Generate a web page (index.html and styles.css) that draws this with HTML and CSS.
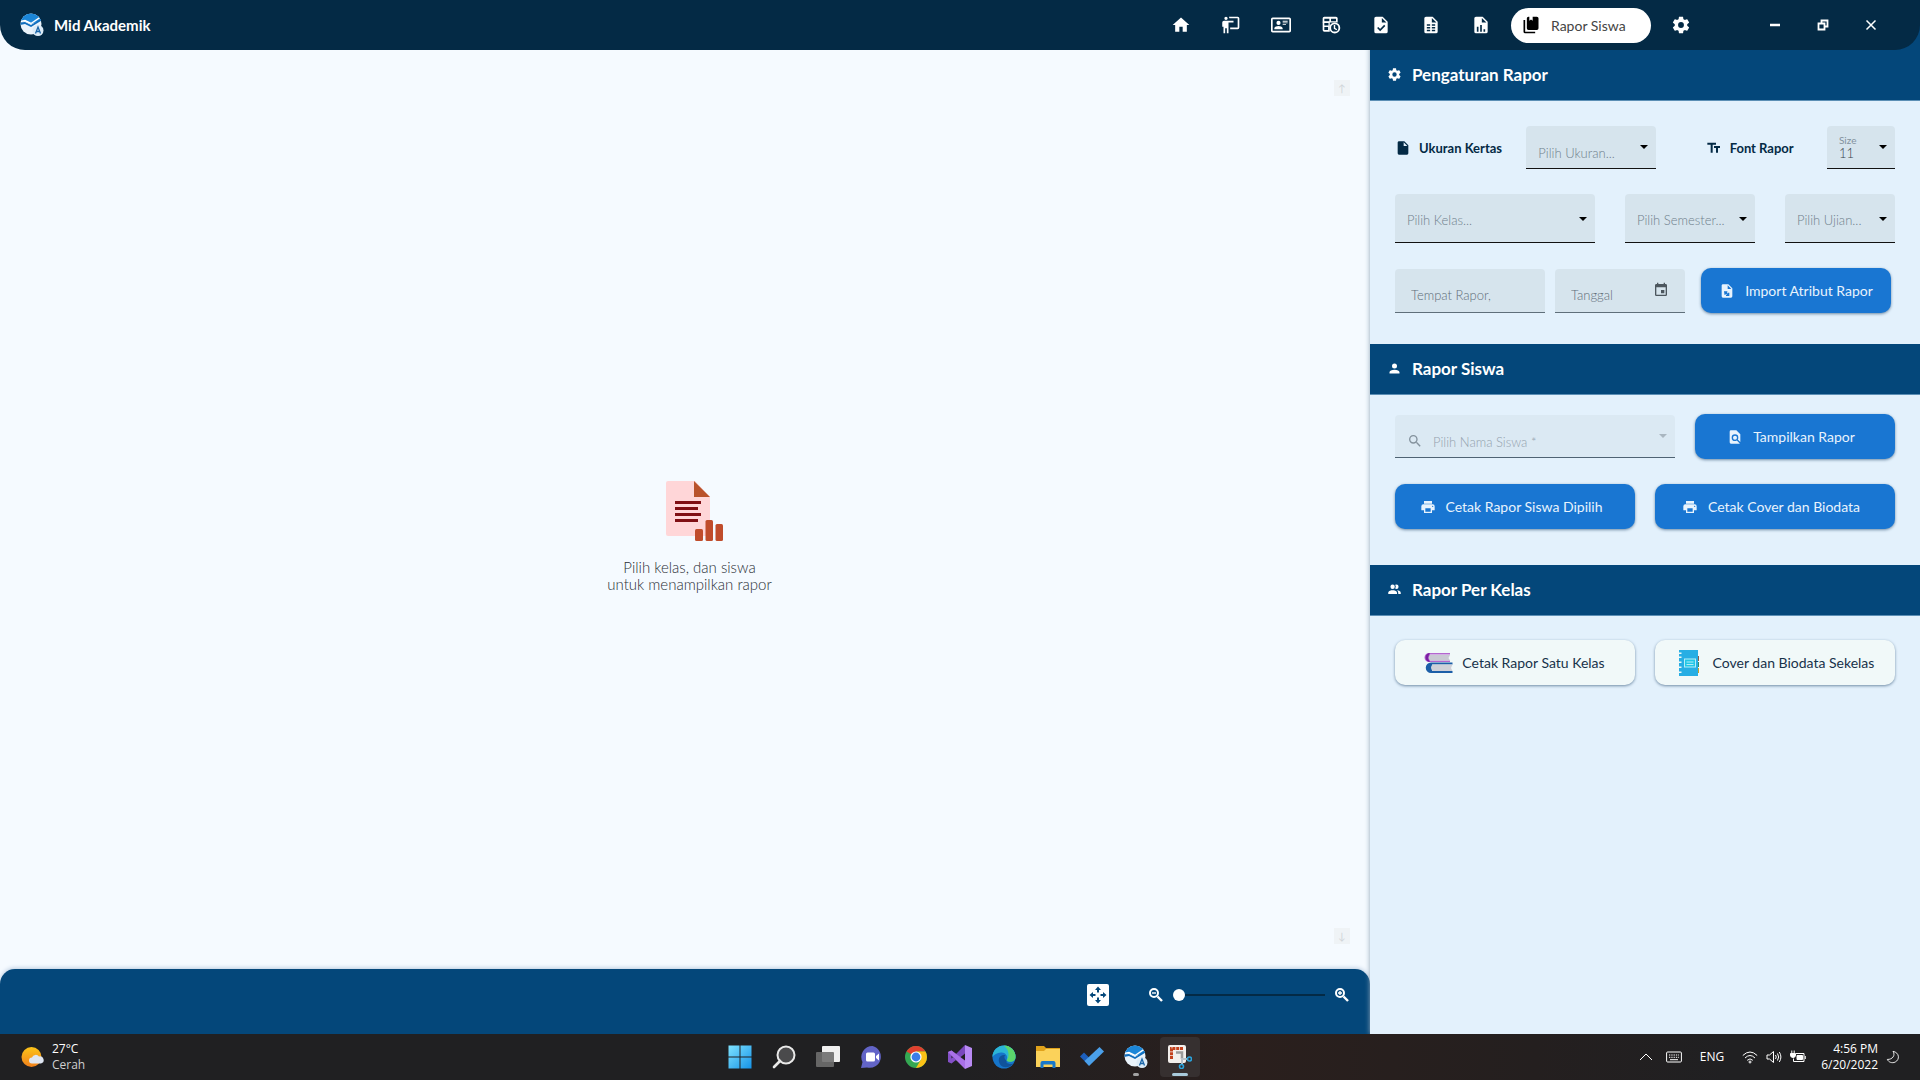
FILE: index.html
```html
<!DOCTYPE html>
<html lang="id">
<head>
    <meta charset="utf-8">
    <title>Mid Akademik - Rapor Siswa</title>
    <link rel="stylesheet" href="styles.css">
</head>
<body>

    <svg class="sprite" aria-hidden="true">
        <symbol id="i-home" viewBox="0 0 24 24"><path d="M10,20V14H14V20H19V12H22L12,3L2,12H5V20H10Z"/></symbol>
        <symbol id="i-teacher" viewBox="0 0 24 24"><path d="M20,17A2,2 0 0,0 22,15V4A2,2 0 0,0 20,2H9.46C9.81,2.61 10,3.3 10,4H20V15H11V17M15,7V9H9V22H7V16H5V22H3V14H1.5V9A2,2 0 0,1 3.5,7H15M8,4A2,2 0 0,1 6,6A2,2 0 0,1 4,4A2,2 0 0,1 6,2A2,2 0 0,1 8,4Z"/></symbol>
        <symbol id="i-card" viewBox="0 0 24 24"><path d="M22,3H2C0.91,3.04 0.04,3.91 0,5V19C0.04,20.09 0.91,20.96 2,21H22C23.09,20.96 23.96,20.09 24,19V5C23.96,3.91 23.09,3.04 22,3M22,19H2V5H22V19M14,17V15.75C14,14.09 10.66,13.25 9,13.25C7.34,13.25 4,14.09 4,15.75V17H14M9,7A2.5,2.5 0 0,0 6.5,9.5A2.5,2.5 0 0,0 9,12A2.5,2.5 0 0,0 11.5,9.5A2.5,2.5 0 0,0 9,7M14,7V8H20V7H14M14,9V10H20V9H14M14,11V12H18V11H14"/></symbol>
        <symbol id="i-schedule" viewBox="0 0 24 24">
            <path fill-rule="evenodd" d="M4,2H18A2,2 0 0,1 20,4V9H2V4A2,2 0 0,1 4,2M4,4.500V7.500H10V4.500ZM12,4.500V7.500H18V4.500Z"/>
            <path fill-rule="evenodd" d="M2,8H10.500V20H4A2,2 0 0,1 2,18ZM4,9.500V12.500H9V9.500ZM4,14.500V18H8.500V14.500Z"/>
            <circle cx="16.500" cy="15.500" r="5.500" style="fill: var(--cut)" stroke="currentColor" stroke-width="2.200"/>
            <path d="M16.200,12V16L19,17.700" fill="none" stroke="currentColor" stroke-width="1.700"/>
        </symbol>
        <symbol id="i-file" viewBox="0 0 24 24"><path d="M13,9V3.500L18.500,9M6,2C4.890,2 4,2.890 4,4V20A2,2 0 0,0 6,22H18A2,2 0 0,0 20,20V8L14,2H6Z"/></symbol>
        <symbol id="i-file-check" viewBox="0 0 24 24"><use href="#i-file"/><path class="cut" d="M8,15L11,18L16.500,12.500" stroke-width="2"/></symbol>
        <symbol id="i-file-table" viewBox="0 0 24 24"><use href="#i-file"/><path class="cut" d="M7,12H11M13,12H17M7,15.300H11M13,15.300H17M7,18.600H11M13,18.600H17" stroke-width="2"/></symbol>
        <symbol id="i-file-chart" viewBox="0 0 24 24"><use href="#i-file"/><path class="cut" d="M8,20V14M12,20V12M16,20V17" stroke-width="2"/></symbol>
        <symbol id="i-file-import" viewBox="0 0 24 24"><use href="#i-file"/><path class="cut" d="M9,17.500V12.500M7.500,13.300H12.500M9.500,13.500L14,18M14.500,14.500V18.500H10.500" stroke-width="2"/></symbol>
        <symbol id="i-books" viewBox="0 0 24 24"><path d="M19,18H9A2,2 0 0,1 7,16V4A2,2 0 0,1 9,2H10V7L12,5.500L14,7V2H19A2,2 0 0,1 21,4V16A2,2 0 0,1 19,18M17,20V22H5A2,2 0 0,1 3,20V6H5V20H17Z"/></symbol>
        <symbol id="i-cog" viewBox="0 0 24 24"><path d="M12,15.5A3.5,3.5 0 0,1 8.5,12A3.5,3.5 0 0,1 12,8.5A3.5,3.5 0 0,1 15.5,12A3.5,3.5 0 0,1 12,15.5M19.43,12.97C19.47,12.65 19.5,12.33 19.5,12C19.5,11.67 19.47,11.34 19.43,11L21.54,9.37C21.73,9.22 21.78,8.95 21.66,8.73L19.66,5.27C19.54,5.05 19.27,4.96 19.05,5.05L16.56,6.05C16.04,5.66 15.5,5.32 14.87,5.07L14.5,2.42C14.46,2.18 14.25,2 14,2H10C9.75,2 9.54,2.18 9.5,2.42L9.13,5.07C8.5,5.32 7.96,5.66 7.44,6.05L4.95,5.05C4.73,4.96 4.46,5.05 4.34,5.27L2.34,8.73C2.21,8.95 2.27,9.22 2.46,9.37L4.57,11C4.53,11.34 4.5,11.67 4.5,12C4.5,12.33 4.53,12.65 4.57,12.97L2.46,14.63C2.27,14.78 2.21,15.05 2.34,15.27L4.34,18.73C4.46,18.95 4.73,19.03 4.95,18.95L7.44,17.94C7.96,18.34 8.5,18.68 9.13,18.93L9.5,21.58C9.54,21.82 9.75,22 10,22H14C14.25,22 14.46,21.82 14.5,21.58L14.87,18.93C15.5,18.67 16.04,18.34 16.56,17.94L19.05,18.95C19.27,19.03 19.54,18.95 19.66,18.73L21.66,15.27C21.78,15.05 21.73,14.78 21.54,14.63L19.43,12.97Z"/></symbol>
        <symbol id="i-text" viewBox="0 0 24 24"><path d="M2,4V7H7V19H10V7H15V4H2M21,9H12V12H15V19H18V12H21V9Z"/></symbol>
        <symbol id="i-calendar" viewBox="0 0 24 24"><path d="M19,19H5V8H19M16,1V3H8V1H6V3H5C3.89,3 3,3.89 3,5V19A2,2 0 0,0 5,21H19A2,2 0 0,0 21,19V5C21,3.89 20.1,3 19,3H18V1M17,12H12V17H17V12Z"/></symbol>
        <symbol id="i-person" viewBox="0 0 24 24"><path d="M12,4A4,4 0 0,1 16,8A4,4 0 0,1 12,12A4,4 0 0,1 8,8A4,4 0 0,1 12,4M12,14C16.42,14 20,15.79 20,18V20H4V18C4,15.79 7.58,14 12,14Z"/></symbol>
        <symbol id="i-people" viewBox="0 0 24 24"><path d="M16 17V19H2V17S2 13 9 13 16 17 16 17M12.5 7.5A3.5 3.5 0 1 0 9 11A3.5 3.5 0 0 0 12.5 7.5M15.94 13A5.32 5.32 0 0 1 18 17V19H22V17S22 13.37 15.94 13M15 4A3.39 3.39 0 0 0 13.07 4.59A5 5 0 0 1 13.07 10.41A3.39 3.39 0 0 0 15 11A3.5 3.5 0 0 0 15 4Z"/></symbol>
        <symbol id="i-search" viewBox="0 0 24 24"><path d="M9.5,3A6.5,6.5 0 0,1 16,9.5C16,11.11 15.41,12.59 14.44,13.73L14.71,14H15.5L20.5,19L19,20.5L14,15.5V14.71L13.73,14.44C12.59,15.41 11.11,16 9.5,16A6.5,6.5 0 0,1 3,9.5A6.5,6.5 0 0,1 9.5,3M9.5,5C7,5 5,7 5,9.5C5,12 7,14 9.5,14C12,14 14,12 14,9.5C14,7 12,5 9.5,5Z"/></symbol>
        <symbol id="i-file-find" viewBox="0 0 24 24"><path d="M9,13A3,3 0 0,0 12,16A3,3 0 0,0 15,13A3,3 0 0,0 12,10A3,3 0 0,0 9,13M20,19.59V8L14,2H6A2,2 0 0,0 4,4V20A2,2 0 0,0 6,22H18C18.45,22 18.85,21.85 19.19,21.6L14.76,17.17C13.96,17.69 13,18 12,18A5,5 0 0,1 7,13A5,5 0 0,1 12,8A5,5 0 0,1 17,13C17,14 16.69,14.96 16.17,15.75L20,19.59Z"/></symbol>
        <symbol id="i-print" viewBox="0 0 24 24"><path d="M18,3H6V7H18M19,12A1,1 0 0,1 18,11A1,1 0 0,1 19,10A1,1 0 0,1 20,11A1,1 0 0,1 19,12M16,19H8V14H16M19,8H5A3,3 0 0,0 2,11V17H6V21H18V17H22V11A3,3 0 0,0 19,8Z"/></symbol>
        <symbol id="i-lens" viewBox="0 0 14 14">
            <circle cx="5" cy="5" r="4" fill="none" stroke="currentColor" stroke-width="2"/>
            <path d="M8.500,8.500L13,13" stroke="currentColor" stroke-width="2.400"/>
        </symbol>
        <symbol id="i-logo" viewBox="0 0 24 24">
            <clipPath id="disc"><circle cx="11" cy="11" r="10.500"/></clipPath>
            <g clip-path="url(#disc)">
                <rect width="24" height="24" fill="#eaf3fb"/>
                <path d="M0,0H24V5L17,9L11,11L5,8L0,9Z" fill="#1b86d8"/>
                <path d="M0,9.500L5,9L11,12L24,4V6L11,14L5,11L0,12Z" fill="#0f6dbd"/>
                <path d="M0,8.500L5,7.500L11,10.500L22,3" fill="none" stroke="#fff" stroke-width="1.500"/>
            </g>
            <circle cx="18" cy="17.500" r="5.500" fill="#dcebf7"/>
            <path d="M15.500,20.500L18,14L20.500,20.500M16.500,18.500H19.500" fill="none" stroke="#1764a8" stroke-width="1.300"/>
        </symbol>
    </svg>

    <div class="app">
        <header class="topbar">
            <div class="brand">
                <svg class="logo"><use href="#i-logo"/></svg>
                <span>Mid Akademik</span>
            </div>
            <nav class="menu">
                <a href="#" aria-label="Beranda"><svg class="icon"><use href="#i-home"/></svg></a>
                <a href="#" aria-label="Guru"><svg class="icon"><use href="#i-teacher"/></svg></a>
                <a href="#" aria-label="Siswa"><svg class="icon"><use href="#i-card"/></svg></a>
                <a href="#" aria-label="Jadwal"><svg class="icon"><use href="#i-schedule"/></svg></a>
                <a href="#" aria-label="Absensi"><svg class="icon"><use href="#i-file-check"/></svg></a>
                <a href="#" aria-label="Nilai"><svg class="icon"><use href="#i-file-table"/></svg></a>
                <a href="#" aria-label="Rekap"><svg class="icon"><use href="#i-file-chart"/></svg></a>
                <a href="#" class="active"><svg class="icon"><use href="#i-books"/></svg><span>Rapor Siswa</span></a>
                <a href="#" aria-label="Pengaturan"><svg class="icon"><use href="#i-cog"/></svg></a>
            </nav>
            <div class="window-buttons">
                <button type="button" aria-label="Minimize"><svg viewBox="0 0 12 12"><path d="M1,6H11" stroke-width="2.500"/></svg></button>
                <button type="button" aria-label="Restore"><svg viewBox="0 0 12 12"><path d="M1.500,4.500H7.500V10.500H1.500ZM4.500,4V1.500H10.500V7.500H8" stroke-width="1.800"/></svg></button>
                <button type="button" aria-label="Close"><svg viewBox="0 0 12 12"><path d="M1.500,1.500L10.500,10.500M10.500,1.500L1.500,10.500" stroke-width="1.500"/></svg></button>
            </div>
        </header>

        <div class="content">
            <main class="viewer">
                <div class="page-area">
                    <div class="empty">
                        <svg class="empty-icon" viewBox="0 0 58 60">
                            <path d="M2,0H29L44,16V55H2Q0,55 0,53V2Q0,0 2,0Z" fill="#ffd6d8"/>
                            <path d="M28,0L44,16H28Z" fill="#b9522b"/>
                            <path d="M9,21.500H35M9,27.500H32M9,33.500H35M9,39.500H32" stroke="#800f14" stroke-width="2.800"/>
                            <g fill="#c04c2b"><rect x="29" y="48" width="8" height="12" rx="1.500"/><rect x="39.500" y="39" width="7.500" height="21" rx="1.500"/><rect x="49.500" y="43" width="7.500" height="17" rx="1.500"/></g>
                        </svg>
                        <p>Pilih kelas, dan siswa<br>untuk menampilkan rapor</p>
                    </div>
                    <div class="page-buttons">
                        <button type="button" disabled>↑</button>
                        <button type="button" disabled>↓</button>
                    </div>
                </div>
                <div class="zoombar">
                    <button type="button" class="fit" aria-label="Fit">
                        <svg viewBox="0 0 22 22"><path d="M11,2.500L14,6H12V8.500H10V6H8ZM11,19.500L8,16H10V13.500H12V16H14ZM2.500,11L6,8V10H8.500V12H6V14ZM19.500,11L16,14V12H13.500V10H16V8Z"/></svg>
                    </button>
                    <div class="zoom">
                        <button type="button" aria-label="Zoom out"><svg viewBox="0 0 14 14"><use href="#i-lens"/><path d="M3,5H7" stroke="currentColor" stroke-width="1.400"/></svg></button>
                        <input type="range" min="0" max="100" value="0" aria-label="Zoom">
                        <button type="button" aria-label="Zoom in"><svg viewBox="0 0 14 14"><use href="#i-lens"/><path d="M3,5H7M5,3V7" stroke="currentColor" stroke-width="1.400"/></svg></button>
                    </div>
                </div>
            </main>

            <aside class="sidebar">
                <h2><svg><use href="#i-cog"/></svg>Pengaturan Rapor</h2>
                <form class="section settings">
                    <div class="row">
                        <label class="caption" for="ukuran"><svg><use href="#i-file"/></svg>Ukuran Kertas</label>
                        <div class="field w130"><select id="ukuran"><option>Pilih Ukuran...</option></select></div>
                        <label class="caption font" for="size"><svg><use href="#i-text"/></svg>Font Rapor</label>
                        <div class="field size">
                            <label for="size">Size</label>
                            <select id="size"><option>11</option></select>
                        </div>
                    </div>
                    <div class="row tall">
                        <div class="field w200"><select aria-label="Kelas"><option>Pilih Kelas...</option></select></div>
                        <div class="field w130"><select aria-label="Semester"><option>Pilih Semester...</option></select></div>
                        <div class="field w110"><select aria-label="Ujian"><option>Pilih Ujian...</option></select></div>
                    </div>
                    <div class="row place">
                        <div class="field input w150"><input type="text" placeholder="Tempat Rapor," aria-label="Tempat Rapor"></div>
                        <div class="field input w130">
                            <input type="text" placeholder="Tanggal" aria-label="Tanggal">
                            <svg class="calendar"><use href="#i-calendar"/></svg>
                        </div>
                        <button type="button" class="btn import"><svg><use href="#i-file-import"/></svg>Import Atribut Rapor</button>
                    </div>
                </form>

                <h2><svg><use href="#i-person"/></svg>Rapor Siswa</h2>
                <form class="section student">
                    <div class="row">
                        <div class="field search">
                            <svg class="magnify"><use href="#i-search"/></svg>
                            <select disabled aria-label="Nama Siswa"><option>Pilih Nama Siswa *</option></select>
                        </div>
                        <button type="button" class="btn w200"><svg><use href="#i-file-find"/></svg>Tampilkan Rapor</button>
                    </div>
                    <div class="row halves">
                        <button type="button" class="btn"><svg><use href="#i-print"/></svg>Cetak Rapor Siswa Dipilih</button>
                        <button type="button" class="btn"><svg><use href="#i-print"/></svg>Cetak Cover dan Biodata</button>
                    </div>
                </form>

                <h2><svg><use href="#i-people"/></svg>Rapor Per Kelas</h2>
                <div class="section">
                    <div class="row halves">
                        <button type="button" class="btn light">
                            <svg class="picture" viewBox="0 0 30 30">
                                <path d="M27,5H6A4,4 0 0,0 6,14H27V12.500H7V6.500H27Z" fill="#b467cf"/>
                                <path d="M27,7H7Q4,9.500 7,12.500H27L25.500,10Z" fill="#c9c9d3"/>
                                <path d="M7,5A4.500,4.500 0 0,0 7,14Q3.500,9.500 7,5Z" fill="#7a1fa2"/>
                                <path d="M29.500,14.500H8A5,5 0 0,0 8,25H29.500V23H9V16.500H29.500Z" fill="#1c5fa8"/>
                                <path d="M29.500,16.500H9.500Q6.500,19.500 9.500,23H29.500L28,20Z" fill="#cfd0d8"/>
                            </svg>
                            Cetak Rapor Satu Kelas
                        </button>
                        <button type="button" class="btn light">
                            <svg class="picture" viewBox="0 0 30 30">
                                <path d="M23,8H25V13H23Z" fill="#8d5a4a"/><path d="M23,14H25V19H23Z" fill="#2f8f6c"/><path d="M23,20H25V25H23Z" fill="#c9a227"/>
                                <path d="M5,2H24V28H5V25H7.500V23.500H5V20H7.500V18.500H5V15H7.500V13.500H5V10H7.500V8.500H5V6H7.500V4.500H5Z" fill="#27aee4"/>
                                <rect x="10.500" y="11" width="11" height="8" fill="#22c7e6" stroke="#b5edf8"/>
                                <path d="M12.500,14H19.500M12.500,16.500H19.500" stroke="#b5edf8"/>
                            </svg>
                            Cover dan Biodata Sekelas
                        </button>
                    </div>
                </div>
            </aside>
        </div>

        <footer class="taskbar">
            <div class="weather">
                <svg viewBox="0 0 24 22">
                    <defs><linearGradient id="sun" x2="0" y2="1"><stop stop-color="#fcc419"/><stop offset="1" stop-color="#f0801c"/></linearGradient></defs>
                    <circle cx="10.500" cy="11" r="10" fill="url(#sun)"/>
                    <path d="M11,17.500A3,3 0 0,1 11,11.500A4,4 0 0,1 18,10.500A3.500,3.500 0 1,1 20,17.500Z" fill="#dfe6f2"/>
                </svg>
                <div>27°C<br><span>Cerah</span></div>
            </div>

            <div class="apps">
                <a href="#" aria-label="Start"><svg viewBox="0 0 24 24"><defs><linearGradient id="win" x2="1" y2="1"><stop stop-color="#7fe3ff"/><stop offset="1" stop-color="#1593e8"/></linearGradient></defs><path d="M0.500,0.500H11.500V11.500H0.500ZM12.500,0.500H23.500V11.500H12.500ZM0.500,12.500H11.500V23.500H0.500ZM12.500,12.500H23.500V23.500H12.500Z" fill="url(#win)"/></svg></a>
                <a href="#" aria-label="Search"><svg viewBox="0 0 24 24"><circle cx="14" cy="10" r="8.500" fill="#4a4a4c" stroke="#e9e9e9" stroke-width="2"/><path d="M8,16L2,22" stroke="#e9e9e9" stroke-width="2.600" stroke-linecap="round"/></svg></a>
                <a href="#" aria-label="Task view"><svg viewBox="0 0 24 24"><rect x="6" y="1" width="18" height="16" rx="1" fill="#f0f0f0"/><rect y="7" width="18" height="15" rx="1" fill="#6e6e6e" opacity=".9"/></svg></a>
                <a href="#" aria-label="Chat"><svg viewBox="0 0 24 24"><path d="M12.500,1A11,11 0 1,1 7,22.500L1,23L2.500,17A11,11 0 0,1 12.500,1Z" fill="#6264c7"/><rect x="6" y="7.500" width="9" height="9" rx="1.500" fill="#fff"/><path d="M16,11L19,8.500V15.500L16,13Z" fill="#fff"/></svg></a>
                <a href="#" aria-label="Chrome"><svg viewBox="0 0 24 24"><circle cx="12" cy="12" r="11" fill="#34a853"/><path d="M12,12L2.500,6.500A11,11 0 0,1 21.500,6.500H12Z" fill="#e0402f"/><path d="M12,6.500H21.500A11,11 0 0,1 12,23L16.800,14.800Z" fill="#fbc116"/><circle cx="12" cy="12" r="5.600" fill="#fff"/><circle cx="12" cy="12" r="4.400" fill="#3b7de9"/></svg></a>
                <a href="#" aria-label="Visual Studio"><svg viewBox="0 0 24 24"><path d="M0,7L3.500,5.500L8,9L5,12L3.500,10.500V13.500L5,12L8,15L3.500,18.500L0,17Z" fill="#8450c8"/><path d="M17,0L5,12L8.500,15.500L17,8.500Z" fill="#7a48bd"/><path d="M3.500,5.500L0,7L17,24V15.500Z" fill="#a970e8"/><path d="M17,0L24,3V21L17,24Z" fill="#b98af4"/></svg></a>
                <a href="#" aria-label="Edge"><svg viewBox="0 0 24 24"><circle cx="12" cy="12" r="11.500" fill="#1675ca"/><path d="M0.500,12A11.500,11.500 0 0,1 23.500,12C23.500,17 17,18 14.500,15.500C16.500,12 14,7 9,7.500C5,8 2,9.500 0.500,12Z" fill="#2bb5d6"/><path d="M12,0.500A11.500,11.500 0 0,1 23.500,12C23.500,17 17,18 14.500,15.500C18,11 17,5 12,0.500Z" fill="#5bd66b"/><path d="M14.500,15.500C12,14 12,11 13.500,10C7,9 5,15 8.500,20C12,24 19,22 21.500,18.500C19,19.500 16,19 14.500,17.500Z" fill="#10539b"/></svg></a>
                <a href="#" aria-label="Explorer"><svg viewBox="0 0 24 24"><path d="M0,1H8L10,3H24V8H0Z" fill="#e0a21b"/><path d="M0,6H8L10,4H24V22H0Z" fill="#fbd25a"/><path d="M4.500,23V18Q4.500,16 6.500,16H17.500Q19.500,16 19.500,18V23H16.500V19.500H7.500V23Z" fill="#1878c9"/></svg></a>
                <a href="#" aria-label="To Do"><svg viewBox="0 0 24 24"><path d="M0,11.500L4,7.500L12,15.500L8,19.500Z" fill="#1d5fbd"/><path d="M4.500,16L19.500,2L24,6.500L9,21Z" fill="#4ba0ea"/></svg></a>
                <a href="#" class="running" aria-label="Mid Akademik"><svg><use href="#i-logo"/></svg></a>
                <a href="#" class="focused" aria-label="Snipping Tool"><svg viewBox="0 0 24 24"><rect width="18" height="18" rx="2" fill="#f2efec"/><path d="M3.500,14V3.500H15" fill="none" stroke="#c2401c" stroke-width="3" stroke-dasharray="3 .8"/><path d="M8,7.500H14V14" fill="none" stroke="#9b9b9b" stroke-width="2.500"/><path d="M14,13V19.500M13,14H19.500" stroke="#b8c1c8" stroke-width="2"/><circle cx="13.500" cy="21.500" r="2" fill="none" stroke="#2aa4de" stroke-width="1.600"/><circle cx="21.500" cy="14" r="2" fill="none" stroke="#2aa4de" stroke-width="1.600"/></svg></a>
            </div>

            <div class="tray">
                <svg class="chevron" viewBox="0 0 16 16"><path d="M2,11L8,5L14,11"/></svg>
                <svg class="keyboard" viewBox="0 0 16 16"><rect x="0.600" y="3" width="14.800" height="10" rx="1"/><path d="M3,6H13M3,8.300H13" stroke-dasharray="1.300 1"/><path d="M4,10.700H12"/></svg>
                <span class="lang">ENG</span>
                <svg viewBox="0 0 16 16"><path d="M0.800,6.500Q8,-0.500 15.200,6.500M3,9Q8,4 13,9M5.200,11.300Q8,8.500 10.800,11.300"/><circle cx="8" cy="13" r="1"/></svg>
                <svg viewBox="0 0 16 16"><path d="M1,6H3.500L7.500,2.500V13.500L3.500,10H1ZM9.500,6Q11,8 9.500,10M11.500,4.500Q13.800,8 11.500,11.500M13.300,3Q16.500,8 13.300,13"/></svg>
                <svg viewBox="0 0 16 16"><path d="M6,4.500H14V12.500H3.500V9.500"/><path d="M7,6.500H12.500V10.500H7ZM15.300,7V10M0.500,4.500H5.500V6Q5.500,8.500 3,8.500Q0.500,8.500 0.500,6ZM1.800,4V1.500M4.200,4V1.500" fill="#fff"/></svg>
                <div class="clock">4:56 PM<br>6/20/2022</div>
                <svg class="moon" viewBox="0 0 16 16"><path d="M8,1.500C11,6 7.500,11 1.500,10.800C3,14 7,15.500 10.500,13.800C16,11 15.500,3 8,1.500Z"/></svg>
            </div>
        </footer>
    </div>

</body>
</html>
```

FILE: styles.css
```css
* {
  box-sizing: border-box;
}

body {
  margin: 0;
  font-family: Lato, "Liberation Sans", sans-serif;
  font-size: 14px;
  color: #1c2b3a;
  background-color: #f5faff;
}

button, input, select {
  font-family: inherit;
  font-size: inherit;
}

a {
  color: inherit;
  text-decoration: none;
}

svg {
  fill: currentColor;
  flex: none;
}

.sprite {
  position: absolute;
  width: 0;
  height: 0;
}

.app {
  display: flex;
  flex-direction: column;
  height: 100vh;
}

/* top bar */
.topbar {
  display: flex;
  align-items: center;
  height: 50px;
  padding: 0 25px 0 20px;
  border-radius: 0 0 25px 25px;
  background-color: #042a45;
  color: #fff;
  position: relative;
  z-index: 2;
}

.brand {
  display: flex;
  align-items: center;
  gap: 10px;
  margin-right: auto;
  font-size: 15px;
  font-weight: bold;
}

.logo {
  width: 24px;
  height: 24px;
}

.menu {
  display: flex;
  align-items: center;
  margin-right: 45px;
}

.menu a {
  --cut: #042a45;
  display: flex;
  justify-content: center;
  align-items: center;
  width: 50px;
  height: 35px;
}

.icon {
  width: 20px;
  height: 20px;
}

.cut {
  fill: none;
  stroke: var(--cut);
}

.menu a.active {
  justify-content: flex-start;
  gap: 10px;
  width: 140px;
  margin: 0 5px;
  padding-left: 10px;
  border-radius: 18px;
  background-color: #fff;
  color: #000;
}

.menu a.active span {
  color: #444;
  font-size: 14px;
}

.window-buttons {
  display: flex;
}

.window-buttons button {
  width: 48px;
  height: 35px;
  padding: 0;
  border: none;
  background: none;
  color: #fff;
}

.window-buttons svg {
  display: block;
  width: 12px;
  height: 12px;
  margin: auto;
  fill: none;
  stroke: #fff;
}

/* report viewer */
.content {
  display: flex;
  flex: 1;
  min-height: 0;
  margin-top: -25px;
}

.viewer {
  display: flex;
  flex-direction: column;
  flex: 1;
}

.page-area {
  display: flex;
  flex: 1;
  padding: 55px 20px 25px 45px;
}

.empty {
  display: flex;
  flex-direction: column;
  flex: 1;
  justify-content: center;
  align-items: center;
  padding-top: 30px;
  color: #2a2f36;
}

.empty-icon {
  width: 58px;
  height: 60px;
  margin: 20px 0 18px 10px;
}

.empty p {
  margin: 0;
  font-size: 15px;
  font-weight: 300;
  line-height: 17px;
  text-align: center;
}

.page-buttons {
  display: flex;
  flex-direction: column;
  justify-content: space-between;
}

.page-buttons button {
  width: 16px;
  height: 16px;
  padding: 0;
  border: none;
  background-color: #eff3f6;
  color: #d0d5d9;
  font-size: 10px;
  line-height: 16px;
}

.zoombar {
  display: flex;
  justify-content: flex-end;
  gap: 40px;
  height: 65px;
  padding: 15px 21px 0 0;
  border-radius: 15px 15px 0 0;
  background-color: #04477a;
  box-shadow: 0 -1px 4px #b8cbe0;
}

.zoombar button {
  padding: 0;
  border: none;
  background: none;
  color: #fff;
}

.zoombar .fit {
  width: 22px;
  height: 22px;
  border-radius: 2px;
  background-color: #fff;
  color: #04477a;
}

.fit svg {
  display: block;
}

.zoom {
  display: flex;
  align-items: center;
  gap: 10px;
  height: 22px;
}

.zoom svg {
  display: block;
  width: 14px;
  height: 14px;
}

.zoom input {
  appearance: none;
  width: 152px;
  height: 12px;
  margin: 0;
  background: linear-gradient(#042a45, #042a45) center / 100% 2px no-repeat;
}

.zoom input::-webkit-slider-thumb {
  appearance: none;
  width: 12px;
  height: 12px;
  border-radius: 50%;
  background-color: #fff;
}

/* right panel */
.sidebar {
  width: 550px;
  padding-top: 25px;
  background-color: #e3f1fc;
  box-shadow: 0 0 5px #8fa3b5;
  overflow: hidden;
  position: relative;
}

.sidebar::before {
  content: "";
  display: block;
  height: 25px;
  margin-top: -25px;
  background-color: #04477a;
}

.sidebar h2 {
  display: flex;
  align-items: center;
  gap: 10px;
  height: 51px;
  margin: 0;
  padding: 0 0 2px 17px;
  border-bottom: 1px solid #5c8fb5;
  background-color: #04477a;
  color: #fff;
  font-size: 17px;
  font-weight: bold;
}

.sidebar h2 svg {
  width: 15px;
  height: 15px;
}

.section {
  display: flex;
  flex-direction: column;
  padding: 24px 25px 0;
}

.settings {
  gap: 25px;
  padding-top: 25px;
  padding-bottom: 31px;
}

.student {
  gap: 25px;
  padding-top: 19px;
  padding-bottom: 36px;
}

.row {
  display: flex;
  justify-content: space-between;
  align-items: center;
}

.caption {
  display: flex;
  align-items: center;
  gap: 8px;
  color: #042a45;
  font-size: 13px;
  font-weight: bold;
}

.caption svg {
  width: 16px;
  height: 16px;
}

.caption.font {
  margin: 0 9px 0 25px;
}

.field {
  display: flex;
  position: relative;
  height: 43px;
  border-bottom: 1px solid #111;
  border-radius: 4px 4px 0 0;
  background-color: #d6e4ed;
}

.field::after {
  content: "";
  position: absolute;
  right: 8px;
  top: 19px;
  border: 4px solid transparent;
  border-top-color: #000;
  border-bottom: none;
}

.field select,
.field input {
  appearance: none;
  width: 100%;
  padding: 11px 12px 0;
  border: none;
  outline: none;
  background: none;
  color: #6f7f8c;
  font-size: 13px;
  font-weight: 300;
}

.field input::placeholder {
  color: #5f6d78;
}

.tall .field {
  height: 49px;
}

.tall .field::after {
  top: 23px;
}

.tall .field select {
  padding-top: 4px;
}

.field.size {
  width: 68px;
}

.field.size label {
  position: absolute;
  left: 12px;
  top: 8px;
  color: #83929e;
  font-size: 10px;
  line-height: 12px;
}

.field.size select {
  color: #37424b;
}

.w110 {
  width: 110px;
}

.w130 {
  width: 130px;
}

.w150 {
  width: 150px;
}

.w200 {
  width: 200px;
}

.place {
  justify-content: flex-start;
  gap: 10px;
}

.field.input {
  height: 44px;
  border-bottom-color: #5f6f7a;
}

.field.input::after {
  display: none;
}

.field.input input {
  padding: 9px 16px 0;
}

.calendar {
  position: absolute;
  right: 16px;
  top: 13px;
  width: 16px;
  height: 16px;
  color: #4c565e;
}

.field.search {
  width: 280px;
  border-bottom-color: #4f6373;
  background-color: #dbe9f3;
}

.field.search::after {
  border-top-color: #a9b6c0;
}

.field.search select {
  padding-left: 38px;
  color: #94a2ae;
  opacity: 1;
}

.magnify {
  position: absolute;
  left: 12px;
  top: 18px;
  width: 16px;
  height: 16px;
  color: #84929d;
}

.btn {
  --cut: #1976d2;
  display: flex;
  justify-content: center;
  align-items: center;
  gap: 10px;
  height: 45px;
  padding: 0 20px 0 12px;
  border: none;
  border-radius: 10px;
  background-color: #1976d2;
  box-shadow: 0 1px 3px #6f8ba5;
  color: #e8f3fd;
  font-size: 14px;
  white-space: nowrap;
}

.btn svg {
  width: 16px;
  height: 16px;
}

.btn.import {
  width: 190px;
  margin-left: 6px;
  padding-right: 12px;
}

.halves {
  gap: 20px;
}

.halves .btn {
  flex: 1;
}

.btn.light {
  gap: 9px;
  padding-right: 14px;
  background-color: #f1f9f9;
  color: #17324a;
}

.btn .picture {
  width: 30px;
  height: 30px;
}

/* windows taskbar */
.taskbar {
  display: grid;
  grid-template-columns: 1fr auto 1fr;
  align-items: center;
  height: 46px;
  position: relative;
  background: linear-gradient(90deg, #202022 0, #202022 50%, #2a1f1d 65%, #241f1f 80%, #202022 90%);
  color: #fff;
  font-family: "Open Sans", "Noto Sans", sans-serif;
  font-size: 12px;
  line-height: 16px;
}

.weather {
  display: flex;
  align-items: center;
  gap: 7px;
  padding-left: 21px;
}

.weather svg {
  width: 24px;
  height: 22px;
}

.weather span {
  color: #cfcfcf;
}

.apps {
  display: flex;
  gap: 4px;
}

.apps a {
  display: flex;
  flex-direction: column;
  justify-content: center;
  align-items: center;
  width: 40px;
  height: 40px;
  border-radius: 4px;
  position: relative;
}

.apps svg {
  width: 24px;
  height: 24px;
}

.apps .running::after,
.apps .focused::after {
  content: "";
  position: absolute;
  bottom: 1px;
  width: 6px;
  height: 3px;
  border-radius: 2px;
  background-color: #a3a3a3;
}

.apps .focused {
  background-color: #363030;
}

.apps .focused::after {
  width: 16px;
  background-color: #a9cbdc;
}

.tray {
  display: flex;
  justify-content: flex-end;
  align-items: center;
  gap: 8px;
  padding-right: 20px;
}

.tray svg {
  width: 16px;
  height: 16px;
  fill: none;
  stroke: #fff;
}

.tray .keyboard {
  margin-left: 4px;
}

.lang {
  margin: 0 10px;
}

.clock {
  margin-left: 7px;
  text-align: right;
}

.tray .moon {
  width: 14px;
  height: 14px;
}
```
